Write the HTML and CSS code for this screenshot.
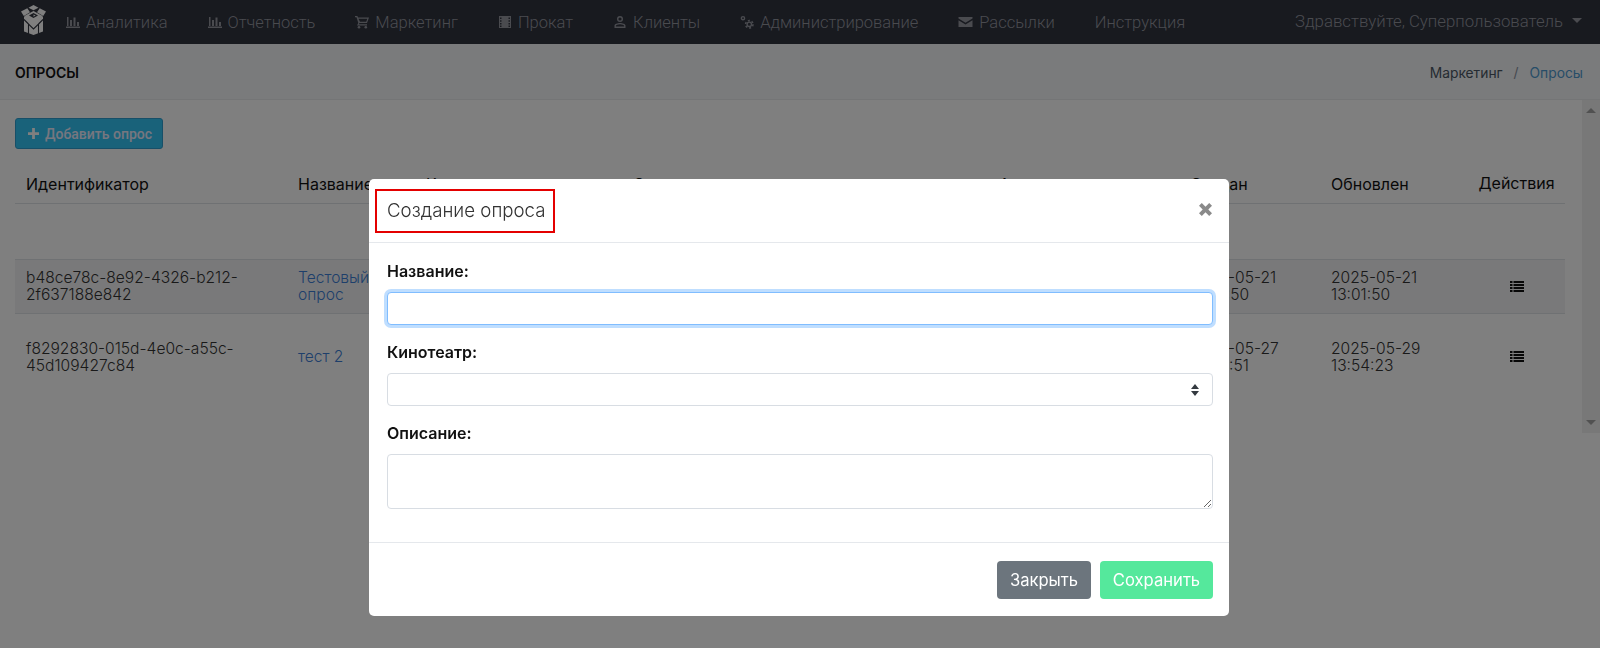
FILE: index.html
```html
<!DOCTYPE html>
<html lang="ru">
<head>
<meta charset="utf-8">
<title>Опросы</title>
<link rel="stylesheet" href="styles.css">
</head>
<body>
<header class="nav">
  <svg class="logo" viewBox="0 0 25 30">
    <path fill="#fff" d="M12.500 0 7.500 2.700 12.500 5.200 17.500 2.700zM6.300 3.300 0 6.600 2.800 11 9 7.300zM18.700 3.300 25 6.600 22.200 11 16 7.300z"/>
    <path fill="#fff" d="M12.500 6 20.800 10.500 22 11.800V26.500L12.500 30 3 26.500V11.800L4.200 10.500z"/>
    <path fill="#30343f" d="M12.500 8 17 10.500 12.500 13 8 10.500z"/>
    <path fill="#fff" d="M12.500 9.500 14.600 10.500 12.500 11.700z"/>
    <path fill="none" stroke="#30343f" stroke-width="1.100" d="M7.500 29V19L12.500 24 17.500 19V29M3 14.500 7.500 19M22 14.500 17.500 19"/>
  </svg>
  <nav class="menu">
    <a class="item"><svg class="ico" viewBox="0 0 14 14"><path d="M1 2h1.500v9H1zM4 5h2v6H4zM7.500 2.500h2V11h-2zM11 7h2v4h-2zM0 11.500h14V13H0z"/></svg>Аналитика</a>
    <a class="item"><svg class="ico" viewBox="0 0 14 14"><path d="M1 2h1.500v9H1zM4 5h2v6H4zM7.500 2.500h2V11h-2zM11 7h2v4h-2zM0 11.500h14V13H0z"/></svg>Отчетность</a>
    <a class="item"><svg class="ico" viewBox="0 0 14 14"><path d="M0 1h2.400l.6 1.500H14l-2 5.500H4.500l-.7 1.300H12v1.200H2l1.300-2.600L1.500 2.200H0zM3.500 3.700l1.500 3.100h6.200l1.100-3.100z"/><circle cx="4" cy="12.300" r="1.300"/><circle cx="10.800" cy="12.300" r="1.300"/></svg>Маркетинг</a>
    <a class="item"><svg class="ico" viewBox="0 0 14 14"><path fill-rule="evenodd" d="M1 1h12v12H1zM2 2.500v1.500h1.500V2.500zM2 5.300v1.500h1.500V5.300zM2 8v1.500h1.500V8zM2 10.500V12h1.500v-1.500zM10.500 2.500v1.500H12V2.500zM10.500 5.300v1.500H12V5.300zM10.500 8v1.500H12V8zM10.500 10.500V12H12v-1.500z"/></svg>Прокат</a>
    <a class="item"><svg class="ico" viewBox="0 0 14 14"><path fill-rule="evenodd" d="M7 1a3 3 0 1 1 0 6 3 3 0 0 1 0-6zm0 1.400a1.600 1.600 0 1 0 0 3.200 1.600 1.600 0 0 0 0-3.200zM7 8c2.500 0 5.500 1 5.500 2.600V13h-11v-2.400C1.500 9 4.500 8 7 8zm0 1.300c-2 0-4.100.8-4.100 1.400v.9h8.200v-.9c0-.6-2.100-1.400-4.100-1.400z"/></svg>Клиенты</a>
    <a class="item"><svg class="ico gears" viewBox="0 0 14 14"><circle class="ring" cx="3" cy="3.200" r="1.600"/><circle class="ring" cx="9.300" cy="9.300" r="2.200"/><circle class="teeth" cx="9.300" cy="9.300" r="3.700"/></svg>Администрирование</a>
    <a class="item"><svg class="ico ico-mail" viewBox="0 0 14 14"><path d="M0 2h14v1.600L7 7.800 0 3.600zM0 5.200l7 4.200 7-4.200V12H0z"/></svg>Рассылки</a>
    <a class="item">Инструкция</a>
  </nav>
  <div class="user">Здравствуйте, Суперпользователь<span class="caret"></span></div>
</header>

<section class="subbar">
  <h1 class="page-title">ОПРОСЫ</h1>
  <div class="crumbs"><span>Маркетинг</span><span class="sep">/</span><a class="crumb-link">Опросы</a></div>
</section>

<main class="content">
  <div class="pane">
    <button class="add-btn"><svg class="plus" viewBox="0 0 12 12"><path d="M4.500 0h3v4.500H12v3H7.500V12h-3V7.500H0v-3h4.500z"/></svg>Добавить опрос</button>
    <table class="grid">
      <colgroup>
        <col class="c1"><col class="c2"><col class="c3"><col class="c4"><col class="c5"><col class="c6"><col class="c7"><col class="c8">
      </colgroup>
      <thead>
        <tr><th>Идентификатор</th><th>Название</th><th>Кинотеатр</th><th>Описание</th><th>Активен</th><th>Создан</th><th>Обновлен</th><th class="center">Действия</th></tr>
      </thead>
      <tbody>
        <tr class="filter-row"><td colspan="8"></td></tr>
        <tr class="row-a">
          <td>b48ce78c-8e92-4326-b212-2f637188e842</td><td><a class="link">Тестовый опрос</a></td><td></td><td></td><td></td><td>2025-05-21 13:01:50</td><td>2025-05-21 13:01:50</td>
          <td class="center"><svg class="list" viewBox="0 0 14 11"><path d="M0 0h2.500v2H0zM3.500 0H14v2H3.500zM0 3h2.500v2H0zM3.500 3H14v2H3.500zM0 6h2.500v2H0zM3.500 6H14v2H3.500zM0 9h2.500v2H0zM3.500 9H14v2H3.500z"/></svg></td>
        </tr>
        <tr class="row-b">
          <td>f8292830-015d-4e0c-a55c-45d109427c84</td><td><a class="link">тест 2</a></td><td></td><td></td><td></td><td>2025-05-27 14:35:51</td><td>2025-05-29 13:54:23</td>
          <td class="center"><svg class="list" viewBox="0 0 14 11"><path d="M0 0h2.500v2H0zM3.500 0H14v2H3.500zM0 3h2.500v2H0zM3.500 3H14v2H3.500zM0 6h2.500v2H0zM3.500 6H14v2H3.500zM0 9h2.500v2H0zM3.500 9H14v2H3.500z"/></svg></td>
        </tr>
      </tbody>
    </table>
  </div>
  <div class="scrollbar"><span class="arrow-up"></span><span class="arrow-down"></span></div>
</main>

<div class="overlay">
  <div class="modal">
    <div class="modal-head">
      <h2 class="modal-title">Создание опроса</h2>
      <svg class="close" viewBox="0 0 13 13"><path d="M2.800 0 6.500 3.700 10.200 0 13 2.800 9.300 6.500 13 10.200 10.200 13 6.500 9.300 2.800 13 0 10.200 3.700 6.500 0 2.800z"/></svg>
      <span class="marker"></span>
    </div>
    <form class="modal-body">
      <div class="field">
        <label class="lbl">Название:</label>
        <input class="ctl focused" type="text">
      </div>
      <div class="field">
        <label class="lbl">Кинотеатр:</label>
        <div class="select-wrap">
          <select class="ctl sel"><option></option></select>
          <svg class="updown" viewBox="0 0 8 12"><path d="M4 0 8 5H0zM0 7h8l-4 5z"/></svg>
        </div>
      </div>
      <div class="field">
        <label class="lbl">Описание:</label>
        <textarea class="ctl area"></textarea>
      </div>
    </form>
    <div class="modal-foot">
      <button class="btn btn-close">Закрыть</button>
      <button class="btn btn-save">Сохранить</button>
    </div>
  </div>
</div>
</body>
</html>
```
FILE: styles.css
```css
* { box-sizing: border-box; }
html, body { height: 100%; }
body {
  margin: 0;
  height: 648px;
  overflow: hidden;
  background: #fff;
  color: #212529;
  font-family: "Inter", "Roboto", sans-serif;
  font-size: 15.600px;
}
.nav {
  height: 44px;
  background: #30343f;
  display: flex;
  align-items: center;
  color: #94969f;
  font-family: "Roboto", sans-serif;
  font-weight: 300;
  font-size: 16.500px;
}
.logo { width: 25px; height: 30px; margin-left: 21px; margin-top: -5px; flex: none; }
.menu { display: flex; align-items: center; margin-left: 20px; }
.item { display: flex; align-items: center; margin-right: 40px; white-space: nowrap; }
.ico { width: 14px; height: 14px; margin-right: 6px; fill: #94969f; }
.ico-mail { width: 15px; }
.gears .ring { fill: none; stroke: #94969f; stroke-width: 1.400; }
.gears .teeth { fill: none; stroke: #94969f; stroke-width: 1.600; stroke-dasharray: 2 1.880; }
.user { margin-left: auto; padding-right: 18px; display: flex; align-items: center; white-space: nowrap; margin-top: -3px; font-size: 16.800px; }
.caret { width: 0; height: 0; margin-left: 9px; border: 5px solid transparent; border-top-color: #94969f; border-bottom: 0; }

.subbar {
  height: 56px;
  background: #f5f6f9;
  border-bottom: 1px solid #e8eaed;
  display: flex;
  align-items: center;
  justify-content: space-between;
  padding: 2px 17px 0 15px;
}
.page-title { margin: 0; font-size: 14px; font-weight: 600; color: #111; }
.crumbs { display: flex; font-size: 13.800px; color: #4a5664; }
.sep { margin: 0 11px; color: #8a94a0; }
.crumb-link { color: #4f9bd0; }

.content { height: 333px; display: flex; background: #fff; }
.pane { flex: 1; padding: 18px 17px 0 15px; }
.add-btn {
  display: flex;
  align-items: center;
  height: 31px;
  width: 148px;
  padding: 0 0 0 12px;
  border: 1px solid #2f9fd0;
  border-radius: 3px;
  background: #33c4f5;
  color: #eef;
  font-family: "Roboto", sans-serif;
  font-weight: 500;
  font-size: 14px;
}
.plus { width: 11px; height: 11px; margin-right: 6px; fill: #fff; }
.grid { width: 1550px; margin-top: 16px; border-collapse: collapse; table-layout: fixed; line-height: 17px; }
.c1 { width: 272px; } .c2 { width: 128px; } .c3 { width: 207px; } .c4 { width: 366px; }
.c5 { width: 191px; } .c6 { width: 141px; } .c7 { width: 148px; } .c8 { width: 97px; }
.grid th {
  height: 38px;
  padding: 2px 11px 0;
  border-bottom: 1px solid #dee2e6;
  text-align: left;
  font-size: 16px;
  font-weight: 400;
  color: #111;
}
.grid td { padding: 0 11px; color: #333; font-weight: 300; }
.grid .center { text-align: center; padding: 0; }
.filter-row td { height: 56px; }
.row-a td { height: 54px; background: #f2f3f5; border-top: 1px solid #dee2e6; border-bottom: 1px solid #dee2e6; }
.row-b td { height: 87px; }
.link { color: #3d7fd6; }
.list { width: 14px; height: 11px; fill: #111; }
.scrollbar { width: 18px; background: #f1f1f1; position: relative; display: flex; flex-direction: column; justify-content: space-between; align-items: center; padding: 8px 0; }
.arrow-up { border: 5px solid transparent; border-top: 0; border-bottom-color: #a3a3a3; }
.arrow-down { border: 5px solid transparent; border-bottom: 0; border-top-color: #a3a3a3; }

.overlay {
  position: fixed;
  inset: 0;
  background: rgba(0, 0, 0, .5);
  display: flex;
  justify-content: center;
  align-items: flex-start;
  padding: 179px 2px 0 0;
}
.modal { width: 860px; background: #fff; border-radius: 5px; }
.modal-head {
  position: relative;
  height: 64px;
  padding: 0 16px 0 18px;
  border-bottom: 1px solid #e5e8ec;
  display: flex;
  align-items: center;
  justify-content: space-between;
}
.modal-title { margin: 0; font-size: 18.700px; font-weight: 300; color: #333; }
.close { width: 13px; height: 13px; margin: -2px 1px 0 0; fill: #8a8a8a; }
.marker { position: absolute; left: 6px; top: 10px; width: 180px; height: 44px; border: 2px solid #e40000; }
.modal-body { padding: 17px 16px 17px 18px; }
.field { margin-bottom: 16px; }
.lbl { display: block; height: 23px; line-height: 23px; margin-bottom: 9px; font-size: 16px; font-weight: 600; color: #111; }
.ctl {
  display: block;
  width: 100%;
  height: 33px;
  border: 1px solid #d8dde3;
  border-radius: 4px;
  background: #fff;
  font: inherit;
  outline: none;
}
.focused { border-color: #80bdff; box-shadow: 0 0 0 3px rgba(0, 123, 255, .25); }
.sel { appearance: none; }
.select-wrap { position: relative; }
.updown { position: absolute; right: 14px; top: 11px; width: 8px; height: 12px; fill: #343a40; }
.area { height: 55px; resize: vertical; }
.modal-foot {
  border-top: 1px solid #e5e8ec;
  padding: 18px 16px 17px 18px;
  display: flex;
  justify-content: flex-end;
  gap: 9px;
}
.btn { height: 38px; border-radius: 4px; border: 1px solid transparent; color: #fff; font-family: "Inter", sans-serif; font-size: 16.600px; }
.btn-close { width: 94px; background: #6c757d; }
.btn-save { width: 113px; background: #55e89c; }
```
